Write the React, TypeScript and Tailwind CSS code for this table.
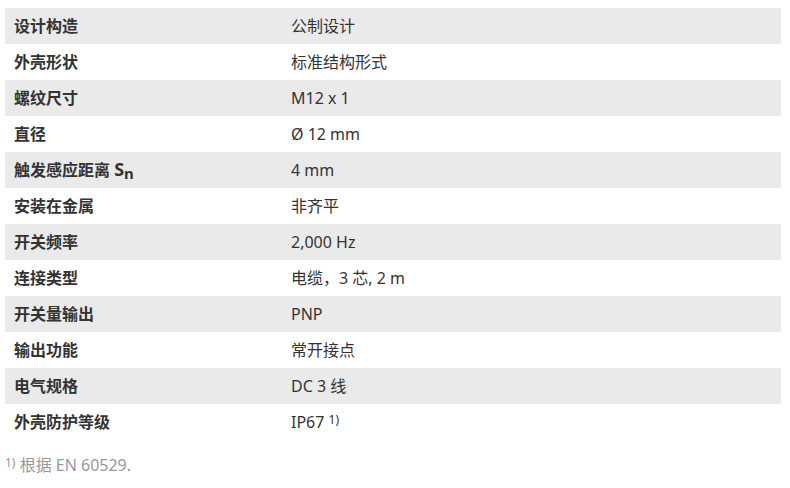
import type { ReactNode } from 'react';

type Row = { label: ReactNode; value: ReactNode };

const rows: Row[] = [
  { label: '设计构造', value: '公制设计' },
  { label: '外壳形状', value: '标准结构形式' },
  { label: '螺纹尺寸', value: 'M12 x 1' },
  { label: '直径', value: 'Ø 12 mm' },
  {
    label: (
      <>
        触发感应距离 <span className="text-[18px]">S</span>
        <span className="text-[15px] align-[-3px]">n</span>
      </>
    ),
    value: '4 mm',
  },
  { label: '安装在金属', value: '非齐平' },
  { label: '开关频率', value: '2,000 Hz' },
  { label: '连接类型', value: '电缆，3 芯, 2 m' },
  { label: '开关量输出', value: 'PNP' },
  { label: '输出功能', value: '常开接点' },
  { label: '电气规格', value: 'DC 3 线' },
  {
    label: '外壳防护等级',
    value: (
      <>
        IP67 <span className="text-[12px] align-[4px]">1)</span>
      </>
    ),
  },
];

export default function App() {
  return (
    <div
      className="w-[790px] h-[488px] bg-white text-[#333] pt-2 px-[5px] overflow-hidden flex flex-col gap-[13px]"
      style={{ fontFamily: '"Noto Sans", "Noto Sans CJK SC", sans-serif' }}
    >
      <div className="w-[776px] flex flex-col">
        {rows.map((r, i) => (
          <div
            key={i}
            className={`flex h-9 items-center text-[16px] ${i % 2 === 0 ? 'bg-[#eaeaea]' : 'bg-white'}`}
          >
            <div className="w-[275px] pl-[9px] font-bold">{r.label}</div>
            <div className="pl-[11px]">{r.value}</div>
          </div>
        ))}
      </div>
      <p className="text-[16px] text-[#999]">
        <span className="text-[12px] align-[4px]">1)</span> 根据 EN 60529.
      </p>
    </div>
  );
}
